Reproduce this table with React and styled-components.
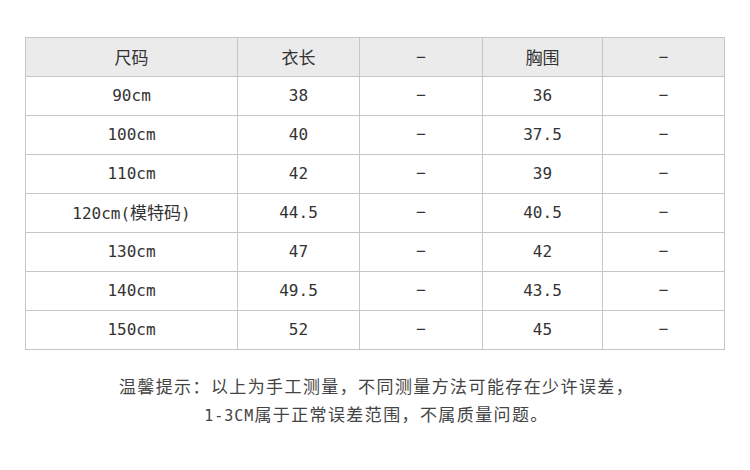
import React from "react";
import styled, { createGlobalStyle } from "styled-components";

const GlobalStyle = createGlobalStyle`
  html, body { margin: 0; padding: 0; background: #ffffff; }
  body { font-family: "Noto Sans CJK SC", "Noto Sans", sans-serif; }
`;

const Page = styled.div`
  width: 750px;
  height: 470px;
  box-sizing: border-box;
  padding: 37px 0 0 25px;
  background: #ffffff;
`;

const Table = styled.table`
  border-collapse: collapse;
  table-layout: fixed;
  width: 699px;
  border: 1px solid #c6c6c6;
`;

const HeadRow = styled.tr`
  background: #ebebeb;
`;

const Row = styled.tr`
  background: #ffffff;
`;

const Cell = styled.td`
  height: 38px;
  padding: 0;
  border: 1px solid #c6c6c6;
  text-align: center;
  vertical-align: middle;
  color: #333333;
  font-family: ${(p) =>
    p.$cjk
      ? '"Noto Sans CJK SC", sans-serif'
      : '"DejaVu Sans Mono", "Noto Sans CJK SC", monospace'};
  font-size: ${(p) => (p.$cjk ? "17px" : "16px")};
  line-height: 20px;
`;

const Cjk = styled.span`
  font-family: "Noto Sans CJK SC", sans-serif;
  font-size: 17px;
`;

const Dash = styled.span`
  font-family: "Liberation Sans", sans-serif;
  font-size: 17px;
  color: #333333;
`;

const Note = styled.div`
  margin-top: 22px;
  margin-left: -25px;
  width: 750px;
  text-align: center;
  color: #444444;
  font-family: "Noto Sans CJK SC", sans-serif;
  font-size: 17px;
  letter-spacing: 1.4px;
  line-height: 28px;
`;

const NoteLine = styled.div`
  padding-left: 3px;
`;

const Latin = styled.span`
  font-family: "DejaVu Sans Mono", monospace;
  font-size: 15px;
  letter-spacing: 1px;
`;

const rows = [
  ["90cm", "38", "36"],
  ["100cm", "40", "37.5"],
  ["110cm", "42", "39"],
  [<>120cm(<Cjk>模特码</Cjk>)</>, "44.5", "40.5"],
  ["130cm", "47", "42"],
  ["140cm", "49.5", "43.5"],
  ["150cm", "52", "45"],
];

export default function App() {
  return (
    <>
      <GlobalStyle />
      <Page>
        <Table>
          <colgroup>
            <col style={{ width: 212 }} />
            <col style={{ width: 122 }} />
            <col style={{ width: 123 }} />
            <col style={{ width: 120 }} />
            <col style={{ width: 122 }} />
          </colgroup>
          <tbody>
            <HeadRow>
              <Cell $cjk>尺码</Cell>
              <Cell $cjk>衣长</Cell>
              <Cell $cjk><Dash>−</Dash></Cell>
              <Cell $cjk>胸围</Cell>
              <Cell $cjk><Dash>−</Dash></Cell>
            </HeadRow>
            {rows.map((r, i) => (
              <Row key={i}>
                <Cell>{r[0]}</Cell>
                <Cell>{r[1]}</Cell>
                <Cell><Dash>−</Dash></Cell>
                <Cell>{r[2]}</Cell>
                <Cell><Dash>−</Dash></Cell>
              </Row>
            ))}
          </tbody>
        </Table>
        <Note>
          <NoteLine>温馨提示：以上为手工测量，不同测量方法可能存在少许误差，</NoteLine>
          <NoteLine><Latin>1-3CM</Latin>属于正常误差范围，不属质量问题。</NoteLine>
        </Note>
      </Page>
    </>
  );
}
